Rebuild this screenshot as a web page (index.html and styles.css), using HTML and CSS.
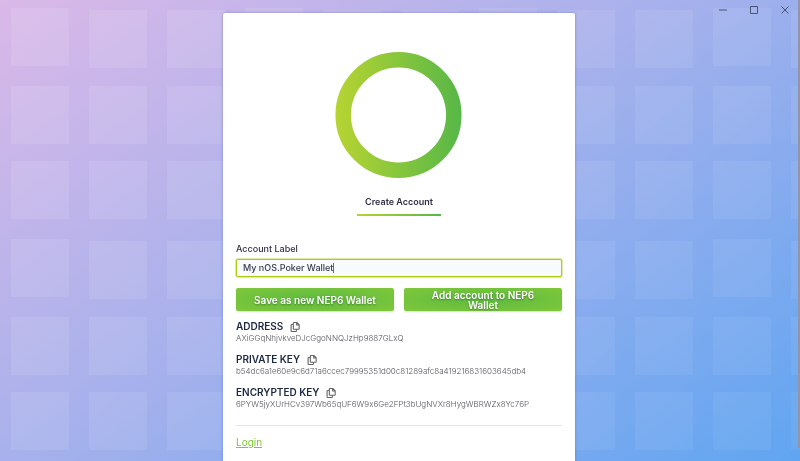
FILE: index.html
```html
<!DOCTYPE html>
<html lang="en">
<head>
    <meta charset="UTF-8">
    <meta name="viewport" content="width=device-width, initial-scale=1.0">
    <title>Create Account</title>
    <link rel="stylesheet" href="styles.css">
</head>
<body>

    <svg class="backdrop" aria-hidden="true">
        <defs>
            <pattern id="tiles" width="234" height="231" patternUnits="userSpaceOnUse">
                <g fill="#fff">
                    <rect x="11" y="8" width="58" height="58"/>
                    <rect x="89" y="10" width="58" height="58"/>
                    <rect x="167" y="10" width="58" height="58"/>
                    <rect x="11" y="86" width="58" height="58"/>
                    <rect x="89" y="86" width="58" height="58"/>
                    <rect x="167" y="86" width="58" height="58"/>
                    <rect x="11" y="161" width="58" height="58"/>
                    <rect x="89" y="161" width="58" height="58"/>
                    <rect x="167" y="161" width="58" height="58"/>
                </g>
            </pattern>
        </defs>
        <rect width="100%" height="100%" fill="url(#tiles)"/>
    </svg>

    <div class="window-controls">
        <button type="button" aria-label="Minimize">
            <svg width="10" height="10" viewBox="0 0 10 10"><path d="M1 5h8"/></svg>
        </button>
        <button type="button" aria-label="Maximize">
            <svg width="10" height="10" viewBox="0 0 10 10"><path d="M1.5 1.5h7v7h-7z"/></svg>
        </button>
        <button type="button" aria-label="Close">
            <svg width="10" height="10" viewBox="0 0 10 10"><path d="M1.5 1.5l7 7M8.5 1.5l-7 7"/></svg>
        </button>
    </div>
    <div class="scrollbar"></div>

    <main class="card">
        <svg class="logo" viewBox="0 0 128 128" aria-hidden="true">
            <defs>
                <linearGradient id="ring" x1="0" y1="0" x2="128" y2="0" gradientUnits="userSpaceOnUse">
                    <stop offset="0" stop-color="#b8d432"/>
                    <stop offset="1" stop-color="#55b748"/>
                </linearGradient>
            </defs>
            <circle cx="63.5" cy="64" r="55.3" fill="none" stroke="url(#ring)" stroke-width="15.5"/>
        </svg>
        <h1>Create Account</h1>

        <form class="form">
            <label for="label">Account Label</label>
            <div class="field">
                <input type="text" id="label" value="My nOS.Poker Wallet" autocomplete="off">
                <span class="caret"></span>
            </div>
            <div class="actions">
                <button type="button" class="btn">Save as new NEP6 Wallet</button>
                <button type="button" class="btn">Add account to NEP6 Wallet</button>
            </div>
        </form>

        <section class="key">
            <h2>Address
                <button type="button" class="copy" aria-label="Copy address">
                    <svg viewBox="0 0 18 18"><path d="M7 1h5.5l4 4V12a1 1 0 0 1-1 1H7a1 1 0 0 1-1-1V2a1 1 0 0 1 1-1zM12 1V5.5h4.5M6 4.5H3a1 1 0 0 0-1 1V16a1 1 0 0 0 1 1H10.5a1 1 0 0 0 1-1V13"/></svg>
                </button>
            </h2>
            <p>AXiGGqNhjvkveDJcGgoNNQJzHp9887GLxQ</p>
        </section>
        <section class="key">
            <h2>Private key
                <button type="button" class="copy" aria-label="Copy private key">
                    <svg viewBox="0 0 18 18"><path d="M7 1h5.5l4 4V12a1 1 0 0 1-1 1H7a1 1 0 0 1-1-1V2a1 1 0 0 1 1-1zM12 1V5.5h4.5M6 4.5H3a1 1 0 0 0-1 1V16a1 1 0 0 0 1 1H10.5a1 1 0 0 0 1-1V13"/></svg>
                </button>
            </h2>
            <p>b54dc6a1e60e9c6d71a6ccec79995351d00c81289afc8a419216831603645db4</p>
        </section>
        <section class="key">
            <h2>Encrypted key
                <button type="button" class="copy" aria-label="Copy encrypted key">
                    <svg viewBox="0 0 18 18"><path d="M7 1h5.5l4 4V12a1 1 0 0 1-1 1H7a1 1 0 0 1-1-1V2a1 1 0 0 1 1-1zM12 1V5.5h4.5M6 4.5H3a1 1 0 0 0-1 1V16a1 1 0 0 0 1 1H10.5a1 1 0 0 0 1-1V13"/></svg>
                </button>
            </h2>
            <p>6PYW5jyXUrHCv397Wb65qUF6W9x6Ge2FPt3bUgNVXr8HygWBRWZx8Yc76P</p>
        </section>

        <footer class="footer">
            <a href="#login">Login</a>
        </footer>
    </main>

</body>
</html>
```
FILE: styles.css
```css
* {
    margin: 0;
    padding: 0;
    box-sizing: border-box;
}

body {
    font-family: Inter, 'Liberation Sans', sans-serif;
    background: linear-gradient(145deg, #dab8e8 0%, #a8b1ec 45%, #60a5f1 100%);
    min-height: 100vh;
    display: flex;
    flex-direction: column;
    align-items: center;
    overflow: hidden;
    padding-top: 13px;
    color: #2f2f48;
}

button {
    font-family: inherit;
    border: none;
    background: none;
    cursor: pointer;
}

.backdrop {
    position: fixed;
    inset: 0;
    width: 100%;
    height: 100%;
    opacity: 0.11;
    mask-image: linear-gradient(135deg, #000, rgba(0, 0, 0, 0.5));
}

.window-controls {
    position: fixed;
    top: 5px;
    right: 10px;
    display: flex;
    gap: 21px;
}

.window-controls button {
    width: 10px;
    height: 10px;
}

.window-controls svg {
    display: block;
    fill: none;
    stroke: #4c5578;
}

.scrollbar {
    position: fixed;
    top: 0;
    right: 0;
    bottom: 13px;
    width: 2px;
    background: #9494a6;
}

.card {
    position: relative;
    flex: 1;
    width: 44%;
    min-width: 352px;
    margin-right: 2px;
    padding: 38px 13px 12px;
    display: flex;
    flex-direction: column;
    background: #fff;
    border-radius: 2px 2px 0 0;
    box-shadow: 0 0 3px rgba(60, 90, 190, 0.5);
}

.logo {
    width: 128px;
    height: 128px;
    align-self: center;
}

h1 {
    align-self: center;
    margin-top: 17px;
    padding: 0 8px 6px;
    font-size: 9px;
    line-height: 12px;
    font-weight: 600;
    border-bottom: 2px solid;
    border-image: linear-gradient(90deg, #b8d432, #55b748) 1;
}

.form {
    margin-top: 27px;
}

.form label {
    display: block;
    font-size: 9px;
    line-height: 12px;
    font-weight: 500;
}

.field {
    position: relative;
    margin-top: 4px;
}

.field input {
    display: block;
    width: 100%;
    height: 18px;
    padding: 0 6px 1px;
    font-family: inherit;
    font-size: 9px;
    font-weight: 500;
    color: #3a3a50;
    background: #f8fafc;
    border: 1px solid #a9cb10;
    border-radius: 2px;
    box-shadow: 0 0 1px 1px rgba(169, 203, 16, 0.4);
    outline: none;
}

.caret {
    position: absolute;
    top: 4px;
    left: 97px;
    width: 1px;
    height: 10px;
    background: #6a6a7a;
}

.actions {
    display: grid;
    grid-template-columns: 1fr 1fr;
    gap: 10px;
    margin-top: 11px;
}

.btn {
    height: 23px;
    padding: 0 16px;
    font-size: 10px;
    line-height: 10px;
    font-weight: 600;
    color: #fff;
    text-shadow: 0 1px 2px rgba(0, 0, 0, 0.35);
    background: radial-gradient(ellipse at center, #5cba40, #80c83a);
    border-radius: 2px;
    box-shadow: 0 1px 2px rgba(0, 0, 0, 0.15);
}

.key {
    margin-top: 9px;
}

.key h2 {
    display: flex;
    align-items: center;
    gap: 7px;
    font-size: 10px;
    line-height: 13px;
    font-weight: 600;
    text-transform: uppercase;
    color: #1c2740;
}

.key p {
    font-size: 8px;
    line-height: 11px;
    font-weight: 300;
    font-feature-settings: 'calt' 0;
    color: #55555c;
}

.copy {
    width: 10px;
    height: 10px;
}

.copy svg {
    display: block;
    fill: none;
    stroke: #666;
    stroke-width: 2;
}

.footer {
    margin-top: 15px;
    padding-top: 9px;
    border-top: 1px solid #e6e6ea;
}

.footer a {
    display: block;
    width: fit-content;
    font-size: 10px;
    line-height: 14px;
    color: #7cc832;
}
```
